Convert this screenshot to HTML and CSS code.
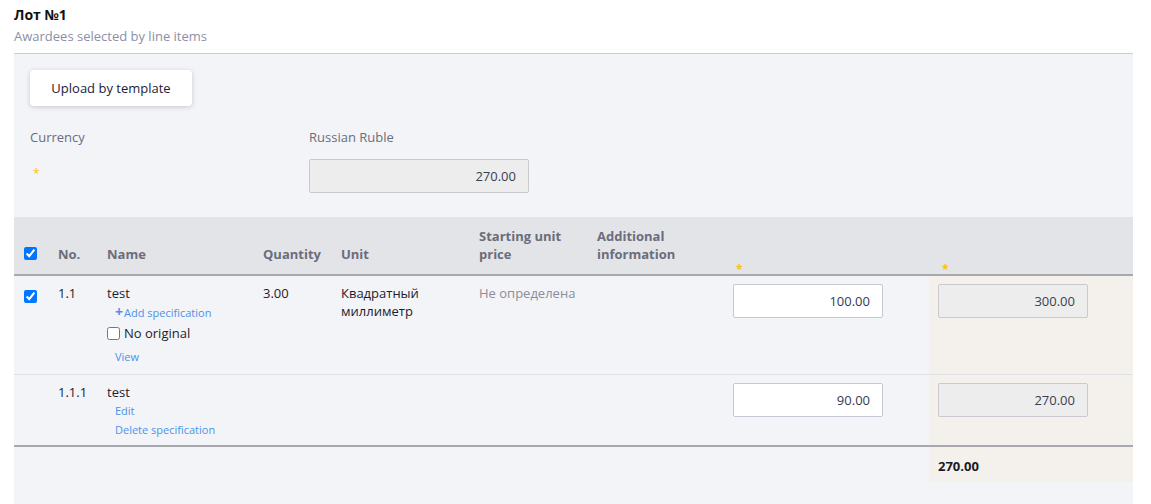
FILE: index.html
```html
<!DOCTYPE html>
<html lang="en">
<head>
  <meta charset="UTF-8">
  <title>Лот №1</title>
  <link rel="stylesheet" href="styles.css">
</head>
<body>

  <h2 class="lot-title">Лот №1</h2>
  <div class="lot-sub">Awardees selected by line items</div>

  <div class="panel">
    <button class="upload-btn" type="button">Upload by template</button>

    <div class="currency">
      <div class="field-label">Currency</div>
      <div class="field-label">Russian Ruble</div>
      <div class="req-mark">*</div>
      <div><input class="num-input readonly" type="text" value="270.00" readonly></div>
    </div>

    <table class="items">
      <colgroup>
        <col style="width:34px">
        <col style="width:49px">
        <col style="width:156px">
        <col style="width:78px">
        <col style="width:138px">
        <col style="width:118px">
        <col style="width:136px">
        <col style="width:206px">
        <col style="width:204px">
      </colgroup>
      <thead>
        <tr>
          <th><input class="all-check" type="checkbox" checked></th>
          <th>No.</th>
          <th>Name</th>
          <th>Quantity</th>
          <th>Unit</th>
          <th>Starting unit price</th>
          <th>Additional information</th>
          <th class="req"><span class="req-mark">*</span></th>
          <th class="req"><span class="req-mark">*</span></th>
        </tr>
      </thead>
      <tbody>
        <tr class="item-row">
          <td><input class="row-check" type="checkbox" checked></td>
          <td>1.1</td>
          <td>
            <div>test</div>
            <a class="link add-spec" href="#"><span class="plus">+</span>Add specification</a>
            <label class="no-orig"><input type="checkbox">No original</label>
            <a class="link view" href="#">View</a>
          </td>
          <td>3.00</td>
          <td>Квадратный миллиметр</td>
          <td class="muted">Не определена</td>
          <td></td>
          <td><input class="num-input" type="text" value="100.00"></td>
          <td class="total-col"><input class="num-input readonly" type="text" value="300.00" readonly></td>
        </tr>
        <tr class="spec-row">
          <td></td>
          <td>1.1.1</td>
          <td>
            <div>test</div>
            <a class="link edit" href="#">Edit</a>
            <a class="link del" href="#">Delete specification</a>
          </td>
          <td></td>
          <td></td>
          <td></td>
          <td></td>
          <td><input class="num-input" type="text" value="90.00"></td>
          <td class="total-col"><input class="num-input readonly" type="text" value="270.00" readonly></td>
        </tr>
      </tbody>
      <tfoot>
        <tr>
          <td colspan="8"></td>
          <td class="total-col sum">270.00</td>
        </tr>
      </tfoot>
    </table>
  </div>

</body>
</html>
```

FILE: styles.css
```css
body {
  margin: 0;
  padding: 0 18px 0 14px;
  font-family: 'Open Sans', 'Noto Sans', sans-serif;
  font-size: 13px;
  color: #1c1c2e;
  background: #fff;
}

.lot-title {
  margin: 0;
  padding-top: 5px;
  font-size: 14px;
  font-weight: 700;
  line-height: 20px;
  color: #111;
}

.lot-sub {
  margin-top: 1px;
  line-height: 20px;
  color: #8c8fa6;
  padding-bottom: 7px;
  border-bottom: 1px solid #cbccd6;
}

.panel {
  background: #f3f4f8;
  padding: 16px 0 22px;
}

.upload-btn {
  margin-left: 16px;
  height: 36px;
  width: 162px;
  border: none;
  border-radius: 4px;
  background: #fff;
  box-shadow: 0 1px 5px rgba(0, 0, 0, 0.18);
  font-family: inherit;
  font-size: 13px;
  color: #1e1b3a;
  cursor: pointer;
}

.currency {
  display: grid;
  grid-template-columns: 279px 220px;
  grid-template-rows: 18px 33px;
  row-gap: 13px;
  padding: 22px 0 0 16px;
}

.field-label {
  line-height: 18px;
  color: #6a6d7d;
}

.req-mark {
  color: #f7c21a;
  font-size: 12px;
  line-height: 12px;
  padding: 9px 0 0 3px;
}

.num-input {
  box-sizing: border-box;
  width: 150px;
  height: 34px;
  padding: 0 12px;
  border: 1px solid #c6c8d4;
  border-radius: 2px;
  background: #fff;
  font-family: inherit;
  font-size: 13px;
  color: #333a4d;
  text-align: right;
}

.currency .num-input {
  width: 220px;
}

.num-input.readonly {
  background: #ededee;
  border-color: #c9cacd;
  color: #3a3f50;
}

.items {
  margin-top: 25px;
  width: 100%;
  table-layout: fixed;
  border-collapse: collapse;
}

.items thead tr {
  height: 58px;
  background: #e3e4e8;
  border-bottom: 2px solid #a8a9ae;
}

.items th {
  padding: 0 0 11px 10px;
  vertical-align: bottom;
  text-align: left;
  font-size: 13px;
  font-weight: 700;
  line-height: 18px;
  color: #6b6d7b;
}

.items th.req {
  padding-bottom: 2px;
}

.items th.req .req-mark {
  position: relative;
  top: 6px;
  padding: 0 0 0 3px;
}

.items input[type="checkbox"] {
  width: 13px;
  height: 13px;
  margin: 0;
  vertical-align: middle;
}

.items .all-check {
  position: relative;
  top: -2px;
}

.items td {
  padding: 9px 0 9px 10px;
  vertical-align: top;
  line-height: 18px;
}

.items .item-row td {
  padding: 8px 0 9px 10px;
}

.items tbody tr {
  border-bottom: 1px solid #dfe0e4;
}

.items tbody tr.spec-row {
  border-bottom: 2px solid #a8a9ae;
}

.items .spec-row td {
  padding: 8px 0 7px 10px;
}

.row-check {
  margin-top: 4px !important;
}

.muted {
  color: #8a8d9b;
}

.link {
  display: block;
  padding-left: 8px;
  font-size: 11px;
  line-height: 16px;
  color: #4b93e6;
  text-decoration: none;
}

.plus {
  font-size: 14px;
  font-weight: 700;
  margin-right: 1px;
}

.add-spec {
  margin-top: 2px;
}

.no-orig {
  display: block;
  margin-top: 3px;
  line-height: 18px;
}

.no-orig input {
  margin-right: 4px !important;
  position: relative;
  top: -1px;
}

.view {
  margin-top: 7px;
}

.edit {
  margin-top: 2px;
}

.del {
  margin-top: 3px;
}

.total-col {
  background: #f4f1ec;
}

.items .item-row .total-col,
.items .spec-row .total-col {
  padding-left: 9px;
}

.items tfoot td {
  padding: 10px 0 7px 9px;
}

.sum {
  font-weight: 700;
  color: #1a1a26;
}
```
